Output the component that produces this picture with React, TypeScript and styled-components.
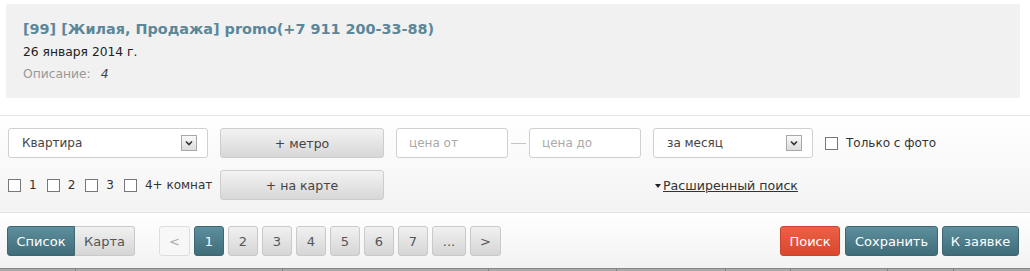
import React, { FC } from 'react';
import styled, { createGlobalStyle, css } from 'styled-components';

const GlobalStyle = createGlobalStyle`
  html, body {
    margin: 0;
    padding: 0;
    background: #fff;
    font-family: "DejaVu Sans", Verdana, sans-serif;
    color: #333;
    overflow: hidden;
  }
`;

const Page = styled.div`
  width: 1030px;
`;

/* Item card */

const Card = styled.div`
  margin: 4px 10px 0 6px;
  padding: 15px 17px 16px;
  background: #f1f1f1;
  border-radius: 2px;
`;

const Title = styled.a`
  display: block;
  font-size: 14.4px;
  line-height: 20px;
  font-weight: bold;
  color: #5b8799;
  text-decoration: none;
`;

const DateLine = styled.div`
  margin-top: 5px;
  font-size: 12.3px;
  line-height: 16px;
  color: #222;
`;

const Description = styled.div`
  margin-top: 6px;
  font-size: 12.3px;
  line-height: 16px;
  color: #999;

  em {
    margin-left: 10px;
    color: #444;
  }
`;

/* Filters */

const FilterPanel = styled.div`
  margin-top: 17px;
  border-top: 1px solid #e4e4e4;
  background: linear-gradient(#fff, #f3f3f3);
  padding: 12px 8px 12px;
  display: grid;
  grid-template-columns: 200px 164px 245px 160px auto;
  grid-template-rows: 30px 30px;
  column-gap: 12px;
  row-gap: 12px;
  align-items: center;
`;

const fieldBox = css`
  box-sizing: border-box;
  height: 30px;
  background: #fff;
  border: 1px solid #d0d0d0;
  border-radius: 3px;
  font-size: 12px;
  display: flex;
  align-items: center;
`;

const Select = styled.div`
  ${fieldBox};
  justify-content: space-between;
  padding: 0 10px 0 13px;
  color: #444;
`;

const ArrowBox = styled.span`
  box-sizing: border-box;
  width: 16px;
  height: 16px;
  border: 1px solid #a8a8a8;
  background: linear-gradient(#fafafa, #dcdcdc);
  display: flex;
  align-items: center;
  justify-content: center;
`;

const Input = styled.div`
  ${fieldBox};
  flex: 1;
  padding: 0 12px;
  color: #aaa;
`;

const PriceRange = styled.div`
  display: flex;
  align-items: center;
`;

const Dash = styled.span`
  width: 21px;
  display: flex;
  justify-content: center;

  &::before {
    content: '';
    width: 15px;
    height: 1px;
    background: #c4c4c4;
  }
`;

const GrayButton = styled.button`
  box-sizing: border-box;
  height: 30px;
  border: 1px solid #cdcdcd;
  border-radius: 3px;
  background: linear-gradient(#f3f3f3, #d7d7d7);
  font-family: inherit;
  font-size: 12.5px;
  color: #444;
  padding: 0;
`;

const CheckLabel = styled.label`
  display: inline-flex;
  align-items: center;
  white-space: nowrap;
  font-size: 12px;
  color: #333;
  gap: 8px;
`;

const Box = styled.span`
  box-sizing: border-box;
  width: 13px;
  height: 13px;
  border: 1px solid #777;
  background: #fff;
`;

const Rooms = styled.div`
  display: flex;
  gap: 10px;
`;

const Advanced = styled.a`
  font-size: 12.6px;
  color: #333;
  text-decoration: underline;
  white-space: nowrap;
  padding-left: 2px;

  &::before {
    content: '';
    display: inline-block;
    border-left: 3.5px solid transparent;
    border-right: 3.5px solid transparent;
    border-top: 4px solid #222;
    margin-right: 2px;
    vertical-align: 2px;
  }
`;

/* Toolbar */

const Toolbar = styled.div`
  border-top: 1px solid #e4e4e4;
  background: linear-gradient(#fff, #f2f2f2);
  padding: 13px 11px 12px 7px;
  display: flex;
  align-items: center;
`;

const Segmented = styled.div`
  display: flex;
  margin-right: 24px;
`;

const tealBg = css`
  background: linear-gradient(#5d8f9d, #3f6c79);
  border-color: #3d6572;
  color: #fff;
`;

const Btn = styled.button<{ $tone?: 'teal' | 'red' | 'gray' | 'faded'; $w?: number }>`
  box-sizing: border-box;
  height: 30px;
  width: ${({ $w }) => ($w ? `${$w}px` : 'auto')};
  border: 1px solid #c9c9c9;
  border-radius: 3px;
  font-family: inherit;
  font-size: 13px;
  padding: 0;
  background: linear-gradient(#f1f1f1, #d5d5d5);
  color: #555;

  ${({ $tone }) => $tone === 'teal' && tealBg}
  ${({ $tone }) =>
    $tone === 'red' &&
    css`
      background: linear-gradient(#ec6147, #d9472e);
      border-color: #c9442d;
      color: #fff;
    `}
  ${({ $tone }) =>
    $tone === 'faded' &&
    css`
      background: #f7f7f7;
      border-color: #dedede;
      color: #aaa;
    `}
`;

const SegLeft = styled(Btn)`
  border-radius: 3px 0 0 3px;
`;

const SegRight = styled(Btn)`
  border-radius: 0 3px 3px 0;
  border-left: none;
`;

const Pager = styled.div`
  display: flex;
  gap: 4px;
`;

const Actions = styled.div`
  margin-left: auto;
  display: flex;
  gap: 4px;

  & > :first-child {
    margin-right: 1px;
  }
`;

/* Table header peeking at the bottom */

const TableHead = styled.div`
  display: flex;
  height: 20px;
  background: #a9a9a9;
  border-top: 1px solid #888;
`;

const HeadCell = styled.div<{ $w: number }>`
  width: ${({ $w }) => $w}px;
  border-left: 1px solid #7c7c7c;

  &:first-child {
    border-left: none;
  }
`;

const headWidths = [76, 207, 207, 128, 109, 64, 97, 65, 77];
const pages = ['1', '2', '3', '4', '5', '6', '7'];

const Chevron: FC = () => (
  <svg width="8" height="6" viewBox="0 0 8 6">
    <path d="M1 1.5 L4 4.5 L7 1.5" stroke="#333" strokeWidth="1.6" fill="none" />
  </svg>
);

const Check: FC<{ label: string }> = ({ label }) => (
  <CheckLabel>
    <Box />
    {label}
  </CheckLabel>
);

const App: FC = () => (
  <Page>
    <GlobalStyle />
    <Card>
      <Title>[99] [Жилая, Продажа] promo(+7 911 200-33-88)</Title>
      <DateLine>26 января 2014 г.</DateLine>
      <Description>
        Описание:
        <em>4</em>
      </Description>
    </Card>

    <FilterPanel>
      <Select>
        Квартира
        <ArrowBox>
          <Chevron />
        </ArrowBox>
      </Select>
      <GrayButton>+ метро</GrayButton>
      <PriceRange>
        <Input>цена от</Input>
        <Dash />
        <Input>цена до</Input>
      </PriceRange>
      <Select>
        за месяц
        <ArrowBox>
          <Chevron />
        </ArrowBox>
      </Select>
      <Check label="Только с фото" />

      <Rooms>
        <Check label="1" />
        <Check label="2" />
        <Check label="3" />
        <Check label="4+ комнат" />
      </Rooms>
      <GrayButton>+ на карте</GrayButton>
      <span />
      <Advanced>Расширенный поиск</Advanced>
    </FilterPanel>

    <Toolbar>
      <Segmented>
        <SegLeft $tone="teal" $w={68}>Список</SegLeft>
        <SegRight $w={60}>Карта</SegRight>
      </Segmented>
      <Pager>
        <Btn $tone="faded" $w={31}>&lt;</Btn>
        {pages.map((p) => (
          <Btn key={p} $tone={p === '1' ? 'teal' : 'gray'} $w={30}>
            {p}
          </Btn>
        ))}
        <Btn $w={34}>...</Btn>
        <Btn $w={31}>&gt;</Btn>
      </Pager>
      <Actions>
        <Btn $tone="red" $w={60}>Поиск</Btn>
        <Btn $tone="teal" $w={93}>Сохранить</Btn>
        <Btn $tone="teal" $w={77}>К заявке</Btn>
      </Actions>
    </Toolbar>

    <TableHead>
      {headWidths.map((w, i) => (
        <HeadCell key={i} $w={w} />
      ))}
    </TableHead>
  </Page>
);

export default App;
